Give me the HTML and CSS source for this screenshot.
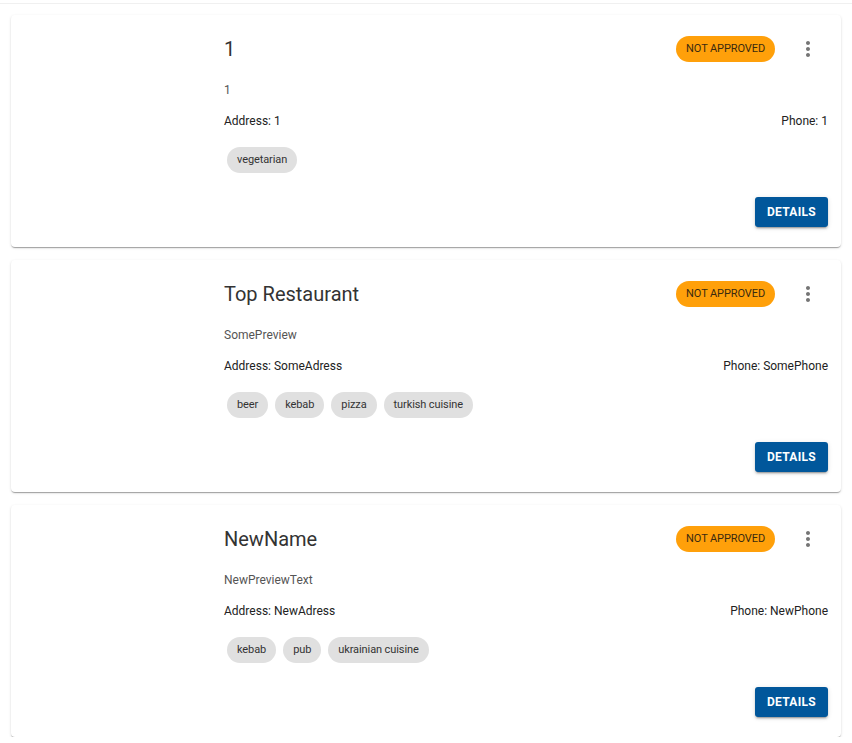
FILE: index.html
```html
<!DOCTYPE html>
<html lang="en">

<head>
    <meta charset="UTF-8">
    <meta name="viewport" content="width=device-width, initial-scale=1.0">
    <title>Restaurants</title>
    <link rel="stylesheet" href="styles.css">
</head>

<body>
    <div class="topline"></div>

    <div class="list">
        <div class="card">
            <div class="thumb"></div>
            <div class="body">
                <div class="head">
                    <h2 class="name">1</h2>
                    <span class="status">NOT APPROVED</span>
                    <button class="menu-btn">
                        <svg width="24" height="24" viewBox="0 0 24 24"><path fill="#757575" d="M12 8c1.1 0 2-.9 2-2s-.9-2-2-2-2 .9-2 2 .9 2 2 2zm0 2c-1.1 0-2 .9-2 2s.9 2 2 2 2-.9 2-2-.9-2-2-2zm0 6c-1.1 0-2 .9-2 2s.9 2 2 2 2-.9 2-2-.9-2-2-2z"/></svg>
                    </button>
                </div>
                <p class="preview">1</p>
                <div class="info">
                    <span>Address: 1</span>
                    <span>Phone: 1</span>
                </div>
                <div class="tags">
                    <span class="chip">vegetarian</span>
                </div>
                <div class="actions">
                    <button class="btn-details">DETAILS</button>
                </div>
            </div>
        </div>

        <div class="card">
            <div class="thumb"></div>
            <div class="body">
                <div class="head">
                    <h2 class="name">Top Restaurant</h2>
                    <span class="status">NOT APPROVED</span>
                    <button class="menu-btn">
                        <svg width="24" height="24" viewBox="0 0 24 24"><path fill="#757575" d="M12 8c1.1 0 2-.9 2-2s-.9-2-2-2-2 .9-2 2 .9 2 2 2zm0 2c-1.1 0-2 .9-2 2s.9 2 2 2 2-.9 2-2-.9-2-2-2zm0 6c-1.1 0-2 .9-2 2s.9 2 2 2 2-.9 2-2-.9-2-2-2z"/></svg>
                    </button>
                </div>
                <p class="preview">SomePreview</p>
                <div class="info">
                    <span>Address: SomeAdress</span>
                    <span>Phone: SomePhone</span>
                </div>
                <div class="tags">
                    <span class="chip">beer</span>
                    <span class="chip">kebab</span>
                    <span class="chip">pizza</span>
                    <span class="chip">turkish cuisine</span>
                </div>
                <div class="actions">
                    <button class="btn-details">DETAILS</button>
                </div>
            </div>
        </div>

        <div class="card">
            <div class="thumb"></div>
            <div class="body">
                <div class="head">
                    <h2 class="name">NewName</h2>
                    <span class="status">NOT APPROVED</span>
                    <button class="menu-btn">
                        <svg width="24" height="24" viewBox="0 0 24 24"><path fill="#757575" d="M12 8c1.1 0 2-.9 2-2s-.9-2-2-2-2 .9-2 2 .9 2 2 2zm0 2c-1.1 0-2 .9-2 2s.9 2 2 2 2-.9 2-2-.9-2-2-2zm0 6c-1.1 0-2 .9-2 2s.9 2 2 2 2-.9 2-2-.9-2-2-2z"/></svg>
                    </button>
                </div>
                <p class="preview">NewPreviewText</p>
                <div class="info">
                    <span>Address: NewAdress</span>
                    <span>Phone: NewPhone</span>
                </div>
                <div class="tags">
                    <span class="chip">kebab</span>
                    <span class="chip">pub</span>
                    <span class="chip">ukrainian cuisine</span>
                </div>
                <div class="actions">
                    <button class="btn-details">DETAILS</button>
                </div>
            </div>
        </div>
    </div>
</body>
</html>
```

FILE: styles.css
```css
body {
    margin: 0;
    padding: 0;
    background: #fff;
    font-family: Roboto, 'Liberation Sans', sans-serif;
    color: #222;
}

.topline {
    height: 3px;
    border-bottom: 1px solid #f0f0f0;
}

.list {
    display: flex;
    flex-direction: column;
    gap: 13px;
    padding: 11px 11px 0 11px;
}

.card {
    display: flex;
    height: 232px;
    background: #fff;
    border-radius: 4px;
    box-shadow: 0 2px 1px -1px rgba(0, 0, 0, 0.2), 0 1px 1px 0 rgba(0, 0, 0, 0.14), 0 1px 3px 0 rgba(0, 0, 0, 0.12);
}

.thumb {
    width: 200px;
    flex-shrink: 0;
}

.body {
    flex: 1;
    padding: 16px 13px 20px 13px;
}

.head {
    display: flex;
    align-items: center;
    height: 36px;
}

.name {
    flex: 1;
    margin: 0;
    font-size: 20px;
    font-weight: 400;
    color: #333;
}

.status {
    height: 26px;
    line-height: 26px;
    padding: 0 10px;
    border-radius: 13px;
    background: #ffa00a;
    color: #3a2a10;
    font-size: 11px;
    letter-spacing: -0.1px;
}

.menu-btn {
    width: 36px;
    height: 36px;
    margin-left: 15px;
    margin-right: 2px;
    padding: 6px;
    border: none;
    background: none;
    border-radius: 50%;
    cursor: pointer;
}

.menu-btn svg {
    display: block;
    width: 24px;
    height: 24px;
}

.preview {
    margin: 13px 0 0 0;
    line-height: 20px;
    font-size: 12px;
    color: #555;
}

.info {
    display: flex;
    justify-content: space-between;
    margin-top: 11px;
    line-height: 20px;
    font-size: 12px;
    color: #222;
}

.tags {
    display: flex;
    gap: 7px;
    margin-top: 16px;
    padding-left: 3px;
}

.chip {
    height: 26px;
    line-height: 26px;
    padding: 0 10px;
    border-radius: 13px;
    background: #e0e0e0;
    color: #333;
    font-size: 11px;
    letter-spacing: -0.1px;
}

.actions {
    display: flex;
    justify-content: flex-end;
    margin-top: 24px;
}

.btn-details {
    height: 30px;
    padding: 0 12px;
    border: none;
    border-radius: 3px;
    background: #01579b;
    color: white;
    font-family: Roboto, 'Liberation Sans', sans-serif;
    font-size: 12px;
    font-weight: 700;
    letter-spacing: 0.3px;
    cursor: pointer;
    box-shadow: 0 3px 1px -2px rgba(0, 0, 0, 0.2), 0 2px 2px 0 rgba(0, 0, 0, 0.14), 0 1px 5px 0 rgba(0, 0, 0, 0.12);
}
```
